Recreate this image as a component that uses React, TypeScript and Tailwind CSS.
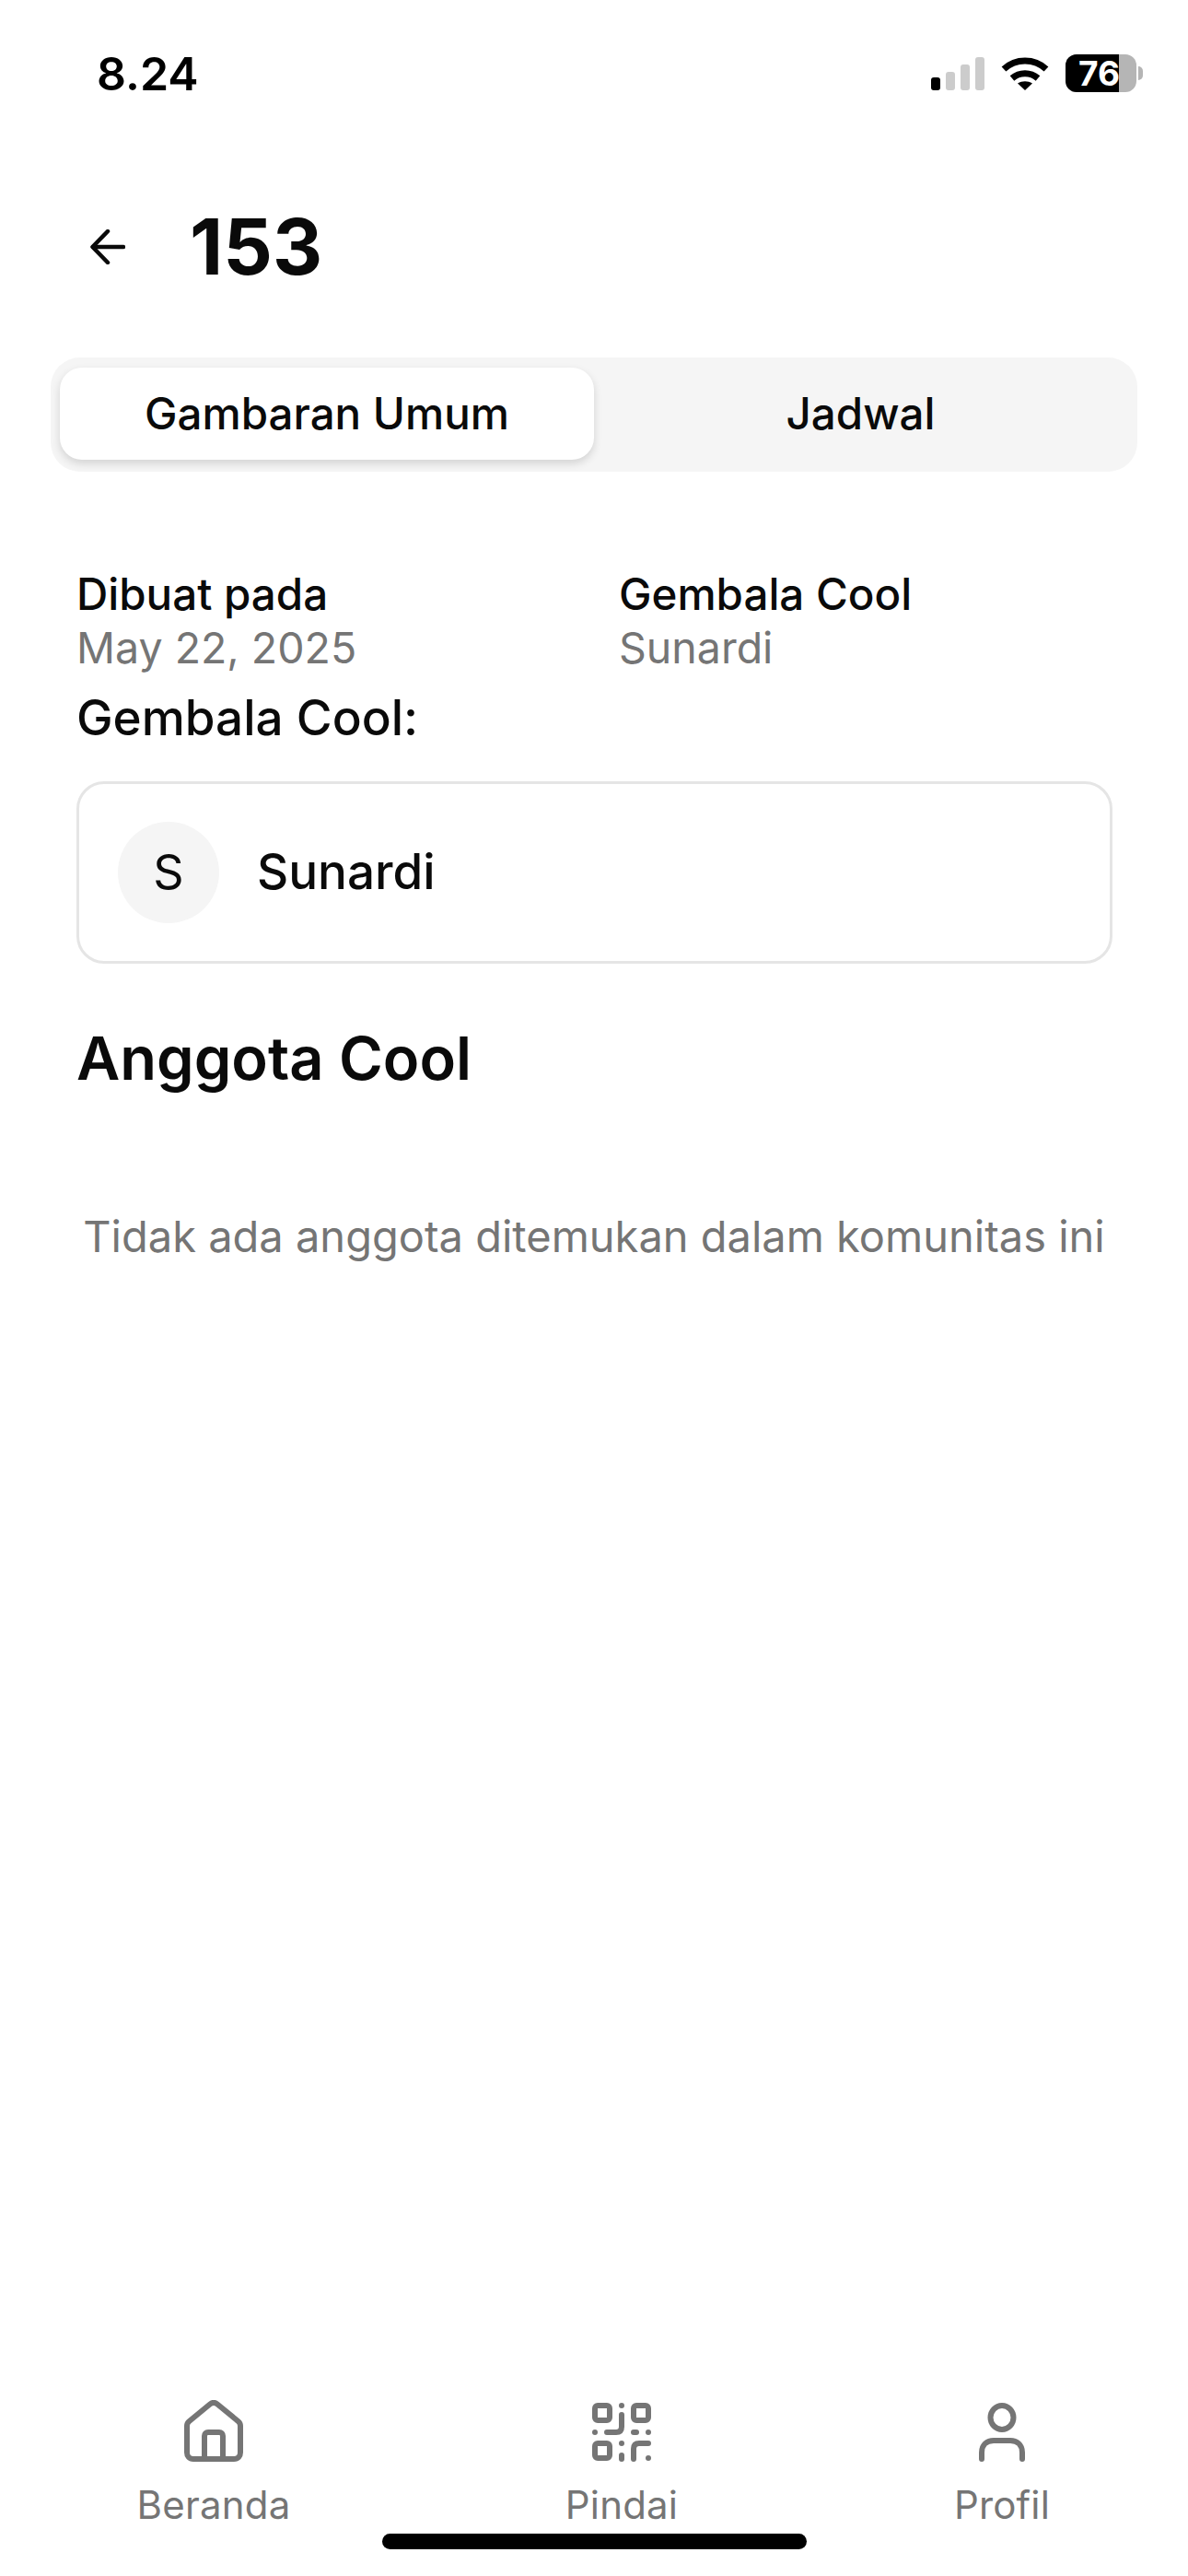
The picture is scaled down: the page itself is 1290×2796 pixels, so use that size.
const FONT = "font-['Inter','Noto_Sans',sans-serif]";

function SignalIcon() {
  return (
    <svg width="58" height="36" viewBox="0 0 58 36" fill="#cccccc">
      <rect x="0" y="22" width="10" height="14" rx="3" fill="#000000" />
      <rect x="16" y="16" width="10" height="20" rx="3" />
      <rect x="32" y="8" width="10" height="28" rx="3" />
      <rect x="48" y="0" width="10" height="36" rx="3" />
    </svg>
  );
}

function WifiIcon() {
  return (
    <svg width="52" height="38" viewBox="0 0 52 38" fill="none" stroke="#000000" strokeWidth="7">
      <path d="M3 14 C16 2 36 2 49 14" />
      <path d="M12 24 C20 17 32 17 40 24" />
      <path d="M26 37 L18 29.5 C23 26.5 29 26.5 34 29.5 Z" fill="#000000" stroke="none" />
    </svg>
  );
}

function BatteryIcon() {
  return (
    <div className="flex items-center">
      <div className="relative flex h-[41px] w-[77px] rounded-[12px] bg-[#b5b5b5]">
        <div className="h-full w-[58px] rounded-l-[12px] bg-black" />
        <span className="absolute left-[14px] top-0 text-[37px] font-bold leading-[41px] text-white">76</span>
      </div>
      <div className="ml-[2px] h-[15px] w-[5px] rounded-r-full bg-[#b5b5b5]" />
    </div>
  );
}

function HomeIcon() {
  return (
    <svg width="64" height="67" viewBox="0 0 64 67" fill="none" stroke="#757575" strokeWidth="6" strokeLinejoin="round">
      <path d="M28 4.5 L5.5 23 C3.8 24.4 3 26 3 28 V57 C3 61 5.5 64 10 64 H54 C58.5 64 61 61 61 57 V28 C61 26 60.2 24.4 58.5 23 L36 4.5 C33.5 2.5 30.5 2.5 28 4.5 Z" />
      <path d="M22 64 V39 C22 36.5 23.5 35 26 35 H38 C40.5 35 42 36.5 42 39 V64" />
    </svg>
  );
}

function QrIcon() {
  return (
    <svg width="64" height="64" viewBox="0 0 64 64" fill="none" stroke="#757575" strokeWidth="6" strokeLinecap="round" strokeLinejoin="round">
      <rect x="3" y="3" width="16" height="16" rx="3" />
      <rect x="45" y="3" width="16" height="16" rx="3" />
      <rect x="3" y="44" width="16" height="16" rx="3" />
      <path d="M32 3 V3.1" />
      <path d="M32 13 V26 C32 30 30 32 26 32 H16" />
      <path d="M3 32 V32.1" />
      <path d="M45 32 H48" />
      <path d="M61 32 V32.1" />
      <path d="M32 44 V44.1" />
      <path d="M32 57 V61" />
      <path d="M45 61 V50 C45 46 47 44 51 44 H61" />
      <path d="M61 60 V60.1" />
    </svg>
  );
}

function PersonIcon() {
  return (
    <svg width="50" height="64" viewBox="0 0 50 64" fill="none" stroke="#757575" strokeWidth="6" strokeLinecap="round">
      <ellipse cx="25" cy="16" rx="12.5" ry="13" />
      <path d="M3 61 V54 C3 45 9 41 16 41 H34 C41 41 47 45 47 54 V61" />
    </svg>
  );
}

function NavItem({ label, icon, className }: { label: string; icon: React.ReactNode; className: string }) {
  return (
    <div className={`flex w-[200px] flex-col items-center ${className}`}>
      <div className="flex h-[67px] items-end">{icon}</div>
      <span className="mt-[19px] text-[42px] leading-[56px] tracking-[0.2px] text-[#757575]">{label}</span>
    </div>
  );
}

export default function App() {
  return (
    <div className={`flex h-[2796px] w-[1290px] flex-col overflow-hidden bg-white text-[#0a0a0a] ${FONT}`}>
      {/* status bar */}
      <div className="flex h-[214px] items-start justify-between pl-[105px] pr-[49px] pt-[50px]">
        <span className="text-[50px] font-semibold leading-[60px] text-black">8.24</span>
        <div className="flex items-center gap-[18px] pt-[9px]">
          <SignalIcon />
          <WifiIcon />
          <BatteryIcon />
        </div>
      </div>

      {/* header */}
      <div className="flex h-[108px] items-center pl-[98px]">
        <svg width="38" height="38" viewBox="0 0 38 38" fill="none" stroke="#0a0a0a" strokeWidth="4.5" strokeLinecap="round" strokeLinejoin="round">
          <path d="M36 19 H3" />
          <path d="M19 2 L2.5 19 L19 36" />
        </svg>
        <h1 className="ml-[70px] text-[84px] font-bold leading-[96px]">153</h1>
      </div>

      {/* tabs */}
      <div className="mx-[55px] mt-[66px] flex h-[124px] rounded-[32px] bg-[#f5f5f5] pb-[13px] pl-[10px] pr-[11px] pt-[11px]">
        <div className="flex h-[100px] w-[580px] items-center justify-center rounded-[24px] bg-white text-[47.5px] font-medium shadow-[0_4px_10px_rgba(0,0,0,0.14)]">
          Gambaran Umum
        </div>
        <div className="flex h-[100px] flex-1 items-center justify-center text-[47.5px] font-medium">Jadwal</div>
      </div>

      {/* info */}
      <div className="mt-[104px] px-[83px]">
        <div className="grid grid-cols-[589px_1fr]">
          <div>
            <div className="text-[47.5px] font-medium leading-[58px]">Dibuat pada</div>
            <div className="text-[46.5px] leading-[58px] text-[#757575]">May 22, 2025</div>
          </div>
          <div>
            <div className="text-[47.5px] font-medium leading-[58px]">Gembala Cool</div>
            <div className="text-[46.5px] leading-[58px] text-[#757575]">Sunardi</div>
          </div>
        </div>
        <div className="mt-[18px] text-[53px] font-medium leading-[58px]">Gembala Cool:</div>

        <div className="mt-[40px] flex h-[198px] w-[1125px] items-center gap-[41px] rounded-[30px] border-[3px] border-[#e5e5e5] px-[42px]">
          <div className="flex h-[110px] w-[110px] items-center justify-center rounded-full bg-[#f5f5f5] text-[52px]">S</div>
          <span className="text-[53px] font-medium">Sunardi</span>
        </div>

        <h2 className="mt-[63px] text-[65px] font-semibold leading-[80px]">Anggota Cool</h2>
        <p className="mt-[124px] text-center text-[47px] leading-[58px] text-[#757575]">
          Tidak ada anggota ditemukan dalam komunitas ini
        </p>
      </div>

      {/* bottom nav */}
      <div className="mt-auto flex h-[191px] items-start pl-[132px] pt-[0px]">
        <NavItem label="Beranda" icon={<HomeIcon />} className="" />
        <NavItem label="Pindai" icon={<QrIcon />} className="ml-[243px]" />
        <NavItem label="Profil" icon={<PersonIcon />} className="ml-[213px]" />
      </div>
      <div className="relative">
        <div className="absolute bottom-[29px] left-[415px] h-[17px] w-[461px] rounded-full bg-black" />
      </div>
    </div>
  );
}
